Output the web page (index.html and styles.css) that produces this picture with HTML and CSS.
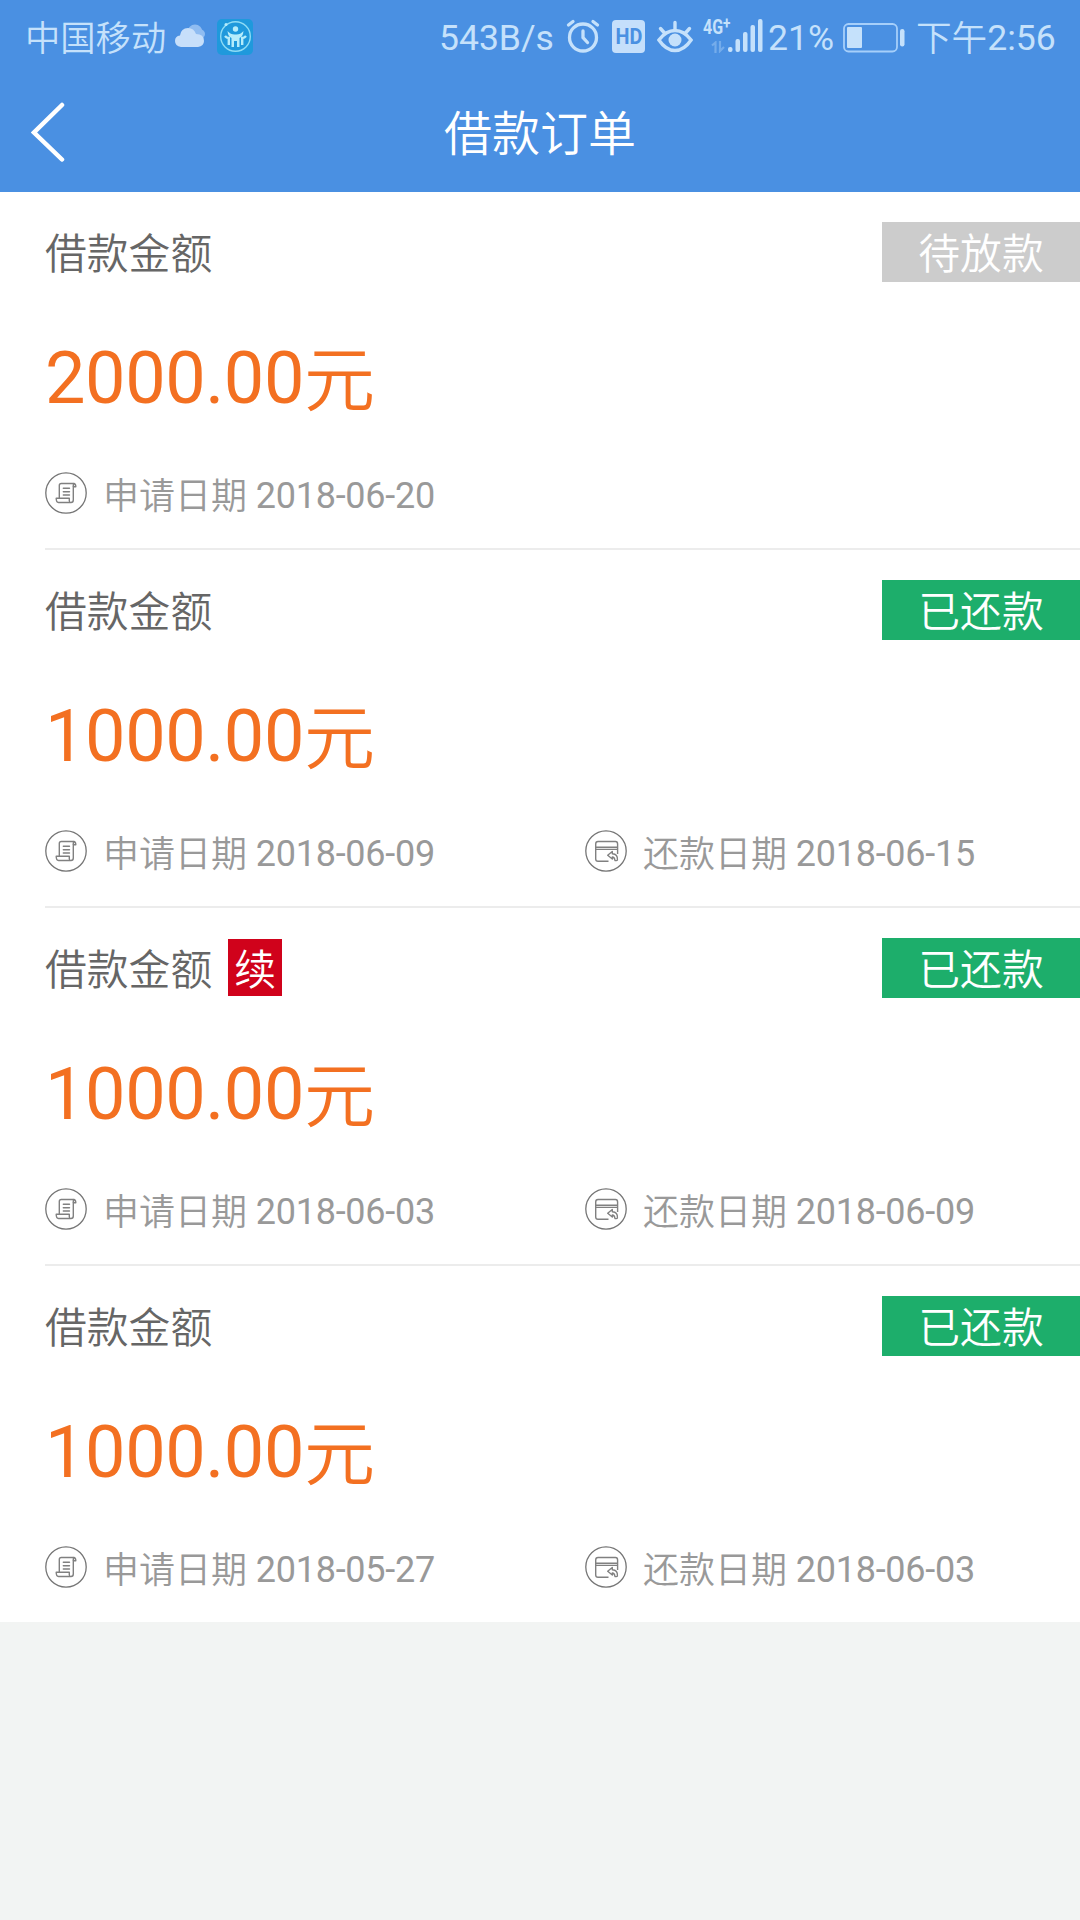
FILE: index.html
```html
<!DOCTYPE html>
<html lang="zh-CN">
<head>
<meta charset="utf-8">
<title>借款订单</title>
<link rel="stylesheet" href="styles.css">
</head>
<body>
<svg class="defs" width="0" height="0" aria-hidden="true">
  <symbol id="i-apply" viewBox="0 0 42 42">
    <circle cx="21" cy="21" r="20.2" fill="none" stroke="#757575" stroke-width="1.3"/>
    <g fill="none" stroke="#808080" stroke-width="1.4" stroke-linejoin="round" stroke-linecap="round">
      <path d="M14.300 25.500V13.500Q14.300 11.500 16.300 11.500H28.500Q30.800 11.500 30.800 14.800H28.300V28Q28.300 30.500 26 30.500H13.500Q11.200 30.500 11.200 26.300H24.300V29Q24.500 30.500 26 30.500"/>
      <path d="M28.300 14.500V13Q28.300 11.500 29 11.500"/>
      <path d="M18.300 16.200H24.500M18.300 19.700H24.500M18.300 23H24.500"/>
    </g>
  </symbol>
  <symbol id="i-repay" viewBox="0 0 42 42">
    <circle cx="21" cy="21" r="20.2" fill="none" stroke="#757575" stroke-width="1.3"/>
    <g fill="none" stroke="#808080" stroke-width="1.4" stroke-linejoin="round">
      <path d="M23.500 31.200H13Q10.700 31.200 10.700 29V14Q10.700 11.500 13 11.500H30.500Q32.600 11.500 32.600 14V24"/>
      <path d="M10.700 17.300H32.600M10.700 19.400H32.600"/>
      <path d="M27.300 21.500L22.700 25.300L27.300 29V27Q29.500 27 30 30.500Q32 31 32.400 30Q33 24 27.300 23.800Z"/>
    </g>
  </symbol>
</svg>

<header class="header">
  <div class="statusbar">
    <span class="carrier">中国移动</span>
    <svg class="cloud" width="30" height="24" viewBox="0 0 30 24">
      <circle cx="20" cy="8" r="7.5" fill="#8fbcf1"/><circle cx="25.5" cy="10" r="4.5" fill="#8fbcf1"/>
      <path d="M6 23Q0 22 0 17Q0 12 5 11.500Q6 4 13 4Q19 4 21 10Q29 10 29 17Q29 22 23 23Z" fill="#c7dffa"/>
    </svg>
    <svg class="app" width="36" height="36" viewBox="0 0 36 36">
      <rect width="36" height="36" rx="5" fill="#1f99dc"/>
      <circle cx="18.500" cy="17.500" r="14.800" fill="none" stroke="#8fdcf5" stroke-width="1.400"/>
      <circle cx="9" cy="5.500" r="1.500" fill="#b5ecfb"/>
      <g fill="#b5ecfb"><circle cx="18.500" cy="10" r="2.700"/>
      <path d="M10.500 12Q14 16 18.500 15.500Q23 16 26.500 12Q26 17.500 22.500 19V28H20V22H17V28H14.500V19Q11 17.500 10.500 12Z"/></g>
      <path d="M8 17Q9.500 19 11.800 19V26M29 17Q27.500 19 25.200 19V26" fill="none" stroke="#b5ecfb" stroke-width="2.400"/>
    </svg>
    <span class="speed">543B/s</span>
    <svg class="alarm" width="34" height="34" viewBox="0 0 34 34" fill="none" stroke="#c5e1fb" stroke-width="3.300" stroke-linecap="round">
      <circle cx="17" cy="18.500" r="13.500"/><path d="M17 12V18.500L21.500 23.500M2.500 6L7 2.500M31.500 6L27 2.500"/>
    </svg>
    <span class="hd"><span>HD</span></span>
    <svg class="eye" width="36" height="34" viewBox="0 0 36 34" fill="none" stroke="#c5e1fb" stroke-width="3.400" stroke-linecap="round">
      <path d="M1.900 21Q9 11.500 18 11.500Q27 11.500 34.100 21Q27 31.500 18 31.500Q9 31.500 1.900 21Z"/>
      <circle cx="18" cy="21" r="6.500" fill="#c5e1fb" stroke="none"/>
      <path d="M18 3.500V11M3.500 9.500L7.500 14M32.500 9.500L28.500 14"/>
    </svg>
    <span class="net"><span class="net-type">4G<sup>+</sup></span>
      <svg class="updown" width="14" height="12" viewBox="0 0 14 12" fill="none" stroke="#74aceb" stroke-width="2.200"><path d="M1 4.500L4.500 1.500V12M9 0V10L13 6"/></svg>
    </span>
    <svg class="signal" width="35" height="34" viewBox="0 0 35 34" fill="#c5e1fb">
      <rect x="0" y="28" width="4.500" height="5" rx="2"/><rect x="7.500" y="20" width="4.500" height="13" rx="2"/><rect x="15" y="13" width="4.500" height="20" rx="2"/><rect x="22.500" y="6" width="4.500" height="27" rx="2"/><rect x="30" y="0" width="4.500" height="33" rx="2"/>
    </svg>
    <span class="percent">21%</span>
    <svg class="battery" width="62" height="30" viewBox="0 0 62 30">
      <rect x="1" y="1" width="53" height="27.500" rx="4.500" fill="none" stroke="#a6cffa" stroke-width="1.800"/>
      <rect x="4" y="4" width="15" height="21" rx="1" fill="#c5e1fb"/><rect x="57" y="6" width="4.500" height="17.500" rx="2.200" fill="#c5e1fb"/>
    </svg>
    <span class="time"><span class="cjk">下午</span>2:56</span>
  </div>
  <div class="navbar">
    <svg class="back" width="34" height="62" viewBox="0 0 34 62"><path d="M31 4L3 31.500L31 58.500" fill="none" stroke="#fff" stroke-width="4.500" stroke-linecap="round"/></svg>
    <h1 class="title">借款订单</h1>
  </div>
</header>

<main class="orders">
  <section class="order">
    <div class="order-head"><span class="label">借款金额</span><span class="badge pending">待放款</span></div>
    <div class="amount">2000.00<span class="cjk">元</span></div>
    <div class="dates">
      <div class="date"><svg class="icon"><use href="#i-apply"/></svg><span><span class="cjk">申请日期</span> 2018-06-20</span></div>
    </div>
  </section>
  <section class="order">
    <div class="order-head"><span class="label">借款金额</span><span class="badge paid">已还款</span></div>
    <div class="amount">1000.00<span class="cjk">元</span></div>
    <div class="dates">
      <div class="date"><svg class="icon"><use href="#i-apply"/></svg><span><span class="cjk">申请日期</span> 2018-06-09</span></div>
      <div class="date"><svg class="icon"><use href="#i-repay"/></svg><span><span class="cjk">还款日期</span> 2018-06-15</span></div>
    </div>
  </section>
  <section class="order">
    <div class="order-head"><span class="label">借款金额</span><span class="renew">续</span><span class="badge paid">已还款</span></div>
    <div class="amount">1000.00<span class="cjk">元</span></div>
    <div class="dates">
      <div class="date"><svg class="icon"><use href="#i-apply"/></svg><span><span class="cjk">申请日期</span> 2018-06-03</span></div>
      <div class="date"><svg class="icon"><use href="#i-repay"/></svg><span><span class="cjk">还款日期</span> 2018-06-09</span></div>
    </div>
  </section>
  <section class="order">
    <div class="order-head"><span class="label">借款金额</span><span class="badge paid">已还款</span></div>
    <div class="amount">1000.00<span class="cjk">元</span></div>
    <div class="dates">
      <div class="date"><svg class="icon"><use href="#i-apply"/></svg><span><span class="cjk">申请日期</span> 2018-05-27</span></div>
      <div class="date"><svg class="icon"><use href="#i-repay"/></svg><span><span class="cjk">还款日期</span> 2018-06-03</span></div>
    </div>
  </section>
</main>
</body>
</html>
```
FILE: styles.css
```css
* { box-sizing: border-box; }
body {
  margin: 0;
  min-height: 1920px;
  background: #f2f4f3;
  font-family: Roboto, "Noto Sans CJK SC", sans-serif;
  white-space: nowrap;
}
svg { display: block; flex: none; }
.defs { position: absolute; }
.cjk { font-weight: 350; letter-spacing: 0; vertical-align: -1px; line-height: 1; }

.header { height: 192px; background: #4a90e2; color: #fff; }
.statusbar {
  display: flex;
  align-items: flex-start;
  height: 72px;
  padding-left: 25px;
  color: #c5e1fb;
  font-size: 35.6px;
  line-height: 77px;
}
.statusbar > * { flex: none; }
.carrier { width: 150px; font-size: 35.3px; font-weight: 350; line-height: 79px; }
.cloud { margin-top: 24px; }
.app { margin: 19px 0 0 12px; }
.speed { width: 126px; margin-left: 186px; font-size: 35.5px; }
.alarm { margin: 19px 0 0 1px; }
.hd {
  display: flex;
  justify-content: center;
  width: 33px;
  height: 33px;
  margin: 20px 0 0 12px;
  border-radius: 4px;
  background: #c5dffb;
  color: #4a90e2;
  font-size: 22px;
  font-weight: 700;
  line-height: 34px;
}
.hd span { transform: scaleX(.9); }
.eye { margin: 19px 0 0 12px; }
.net { width: 35px; height: 34px; margin: 19px 0 0 10px; }
.net-type { display: block; width: 35px; height: 22px; font: 700 20px/17px Roboto, sans-serif; transform: scaleX(.8); transform-origin: left; }
.net-type sup { font-size: 17px; line-height: 0; vertical-align: 5px; }
.updown { margin-left: 8px; }
.signal { margin: 19px 0 0 -10px; }
.percent { width: 75px; margin-left: 5px; }
.battery { margin-top: 23px; }
.time { margin-left: 11px; }

.navbar { position: relative; display: flex; height: 120px; align-items: center; justify-content: center; }
.back { position: absolute; left: 31px; top: 29px; }
.title { margin: 0; font-size: 48px; font-weight: 350; line-height: 60px; padding-top: 6px; }

.order { display: flex; flex-direction: column; height: 358px; padding-top: 30px; background: #fff; }
.order:last-child { height: 356px; }
.order:not(:last-child)::after { content: ""; margin: auto 0 0 45px; height: 2px; background: #ececec; }
.order-head { display: flex; height: 60px; padding-left: 45px; font-size: 41.8px; font-weight: 350; line-height: 66px; }
.label { color: #666; }
.renew { width: 54px; height: 57px; margin: 1px 0 0 16px; background: #d0021b; color: #fff; line-height: 64px; text-align: center; }
.badge { width: 198px; margin-left: auto; color: #fff; text-align: center; }
.pending { background: #ccc; }
.paid { background: #1dae6b; }
.amount { height: 96px; margin-top: 49px; padding-left: 45px; color: #f37021; font-size: 72px; letter-spacing: -.4px; line-height: 96px; }
.amount .cjk { font-size: 71px; font-weight: 350; vertical-align: -2px; }
.dates { display: grid; grid-template-columns: 540px 1fr; height: 42px; margin-top: 45px; padding-left: 45px; }
.date { display: flex; gap: 16px; color: #999; font-size: 36px; letter-spacing: -.25px; line-height: 48px; }
.icon { width: 42px; height: 42px; }
```
